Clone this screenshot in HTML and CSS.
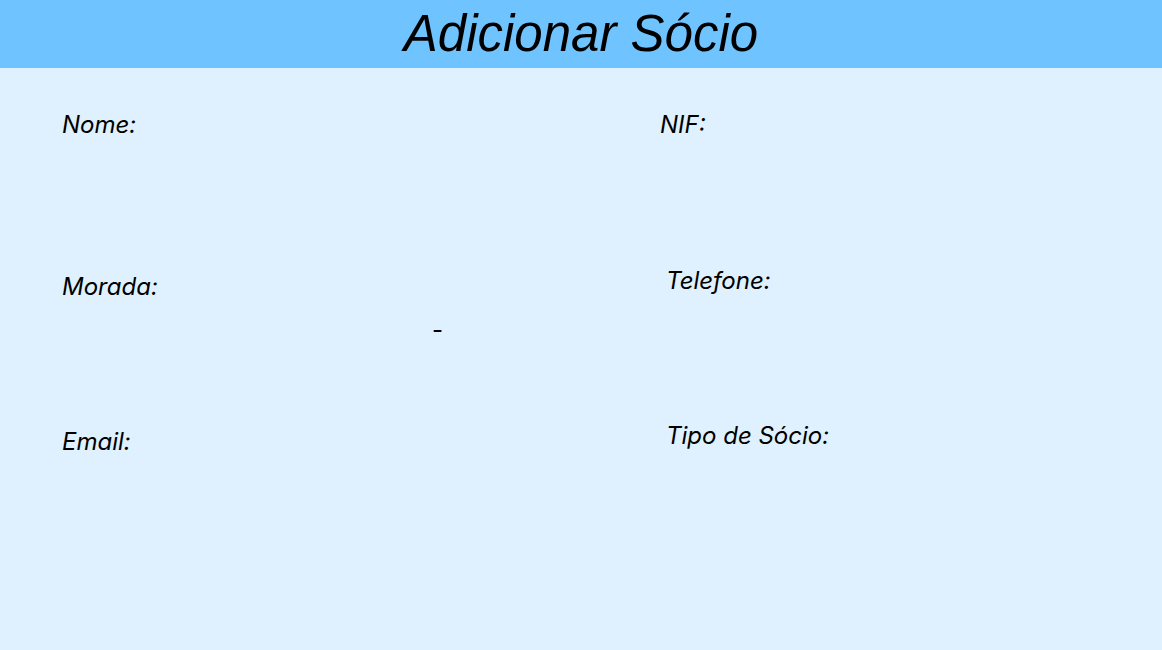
FILE: index.html
```html
<!DOCTYPE html>
<html lang="pt">
<head>
<meta charset="utf-8">
<title>Adicionar Sócio</title>
<link rel="stylesheet" href="styles.css">
</head>
<body>
<header class="topbar">
  <h1 class="title">Adicionar Sócio</h1>
</header>
<main class="form">
  <div class="col col-left">
    <div class="field f-nome"><span class="label">Nome:</span></div>
    <div class="field f-morada">
      <span class="label">Morada:</span>
      <div class="postal"><span class="dash">-</span></div>
    </div>
    <div class="field f-email"><span class="label">Email:</span></div>
  </div>
  <div class="col col-right">
    <div class="field f-nif"><span class="label">NIF:</span></div>
    <div class="field f-tel"><span class="label">Telefone:</span></div>
    <div class="field f-tipo"><span class="label">Tipo de Sócio:</span></div>
  </div>
</main>
</body>
</html>
```
FILE: styles.css
```css
html, body {
  margin: 0;
  padding: 0;
}
body {
  width: 1162px;
  height: 650px;
  background: #dff1fe;
  font-family: Inter, "Noto Sans", sans-serif;
  color: #000;
  overflow: hidden;
}
.topbar {
  height: 68px;
  background: #6fc3ff;
  display: flex;
  justify-content: center;
  align-items: center;
}
.title {
  margin: 0;
  font-family: "Liberation Sans", Arial, sans-serif;
  font-style: italic;
  font-weight: 400;
  font-size: 51px;
  line-height: 68px;
}
.form {
  display: grid;
  grid-template-columns: 598px 1fr;
  padding: 42px 0 0 62px;
}
.col {
  display: flex;
  flex-direction: column;
}
.label {
  display: block;
  font-style: italic;
  font-size: 24px;
  line-height: 29px;
}
.f-morada { margin-top: 133px; }
.f-email { margin-top: 83px; }
.col-right .f-tel { margin-left: 6px; margin-top: 127px; }
.col-right .f-tipo { margin-left: 6px; margin-top: 126px; }
.postal {
  display: flex;
  padding-left: 370px;
  margin-top: 14px;
}
.dash {
  font-size: 24px;
  line-height: 29px;
}
```
